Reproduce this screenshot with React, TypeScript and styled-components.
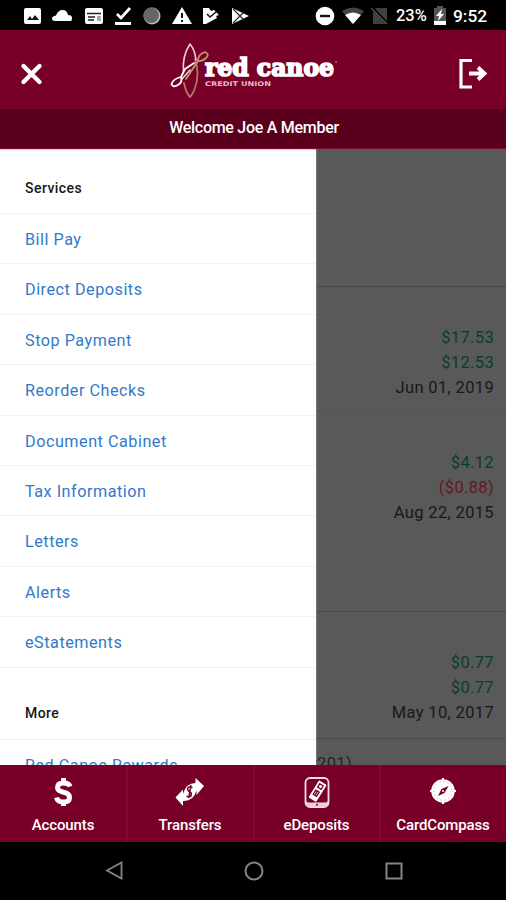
import React from "react";
import styled, { createGlobalStyle } from "styled-components";

const GlobalStyle = createGlobalStyle`
  *, *::before, *::after { box-sizing: border-box; }
  body { margin: 0; background: #000; font-family: Roboto, "Liberation Sans", sans-serif; }
`;

const Screen = styled.div`
  display: flex;
  flex-direction: column;
  width: 506px;
  height: 900px;
  overflow: hidden;
  background: #000;
`;

const StatusBar = styled.div`
  display: flex;
  flex: 0 0 30px;
  min-height: 0;
  justify-content: space-between;
  padding: 0 18px 0 22px;
  color: #fff;
`;

const StatusGroup = styled.div<{ $gap: number }>`
  display: flex;
  align-items: center;
  gap: ${(p) => p.$gap}px;
  height: 30px;
  padding-top: 1px;
`;

const StatusText = styled.span<{ $width: number; $size: number }>`
  width: ${(p) => p.$width}px;
  font-size: ${(p) => p.$size}px;
  font-weight: 500;
  line-height: 28px;
  white-space: nowrap;
  padding-top: 1px;
`;

const Header = styled.header`
  display: grid;
  grid-template-columns: 154px 1fr 154px;
  align-items: center;
  flex: 0 0 79px;
  background: #780028;
`;

const HeaderButton = styled.button<{ $end?: boolean }>`
  display: flex;
  justify-content: ${(p) => (p.$end ? "flex-end" : "flex-start")};
  padding: 8px 18px 0 20px;
  border: 0;
  background: none;
`;

const Logo = styled.svg`
  display: block;
  width: 180px;
  height: 60px;
  margin-left: 10px;
`;

const Wordmark = styled.text`
  font: 700 24px "DejaVu Serif", serif;
  fill: #fff;
  stroke: #fff;
  stroke-width: 1.7px;
`;

const Tagline = styled.text`
  font: 700 6.4px "DejaVu Sans", sans-serif;
  fill: #e3bcc7;
`;

const Welcome = styled.div`
  flex: 0 0 40px;
  background: #5a001d;
  border-bottom: 1px solid #80102f;
  color: #fff;
  font-size: 16px;
  font-weight: 500;
  line-height: 37px;
  letter-spacing: -0.28px;
  text-align: center;
  padding-left: 2px;
`;

const Body = styled.main`
  position: relative;
  flex: 0 0 616px;
  overflow: hidden;
  background: #595959;
`;

const Drawer = styled.nav`
  position: absolute;
  top: 0;
  bottom: 0;
  left: 0;
  width: 316px;
  overflow: hidden;
  background: #fff;
  box-shadow: 0 0 2px rgba(255, 255, 255, 0.45);
  border-top: 1px solid #d8c6cc;
`;

const SectionTitle = styled.h2<{ $height: number; $top: number }>`
  height: ${(p) => p.$height}px;
  margin: 0;
  padding: ${(p) => p.$top}px 0 0 25px;
  border-bottom: 1px solid #f2f2f2;
  color: #171717;
  font-size: 14px;
  font-weight: 500;
  line-height: 20px;
  letter-spacing: 0.45px;
`;

const MenuLink = styled.a`
  display: block;
  height: 50.4px;
  padding-left: 25px;
  border-bottom: 1px solid #f2f2f2;
  color: #3279c9;
  font-size: 16.2px;
  line-height: 51.8px;
  letter-spacing: 0.52px;
`;

const AccountCard = styled.section<{ $height: number; $top: number; $line?: string }>`
  height: ${(p) => p.$height}px;
  padding: ${(p) => p.$top}px 12px 0 317px;
  border-bottom: 1px solid ${(p) => p.$line ?? "#474747"};
  text-align: right;
`;

const Value = styled.div<{ $color?: string }>`
  color: ${(p) => p.$color ?? "#181818"};
  font-size: 16.5px;
  line-height: 24.8px;
  letter-spacing: 0.34px;
`;

const AccountName = styled.div`
  color: #242424;
  font-size: 16.5px;
  line-height: 24px;
  letter-spacing: 0.4px;
  text-align: left;
`;

const TabBar = styled.nav`
  display: grid;
  grid-template-columns: 126px 127px 126px 127px;
  flex: 0 0 77px;
  background: #780028;
`;

const Tab = styled.a`
  display: flex;
  flex-direction: column;
  align-items: center;
  padding-top: 12px;
  color: #fff;
  font-size: 15px;
  font-weight: 500;
  line-height: 20px;
  letter-spacing: -0.13px;
  & + & { box-shadow: inset 2px 0 #7e0a30; padding-left: 1px; }
  svg { display: block; margin-bottom: 6px; }
`;

const SystemNav = styled.div`
  display: flex;
  flex: 0 0 58px;
  align-items: center;
  justify-content: center;
  gap: 120px;
  padding-left: 1px;
`;

const green = "#083f2a";

const services = [
  "Bill Pay", "Direct Deposits", "Stop Payment", "Reorder Checks", "Document Cabinet",
  "Tax Information", "Letters", "Alerts", "eStatements",
];

const NotificationIcons = () => (
  <>
    <svg width="20" height="18" viewBox="0 0 20 18"><rect x="2" y="1" width="17" height="16" rx="2" fill="#fff" /><path d="M5 13l3-4 2 3 3-4 4 5z" fill="#111" /></svg>
    <svg width="22" height="14" viewBox="0 0 22 14"><path d="M3.500 12Q0 12 0 9.500T4 6.500Q6 1 10.500 1T16 6q4 0 4 3.200T17.500 12z" fill="#fff" /></svg>
    <svg width="20" height="18" viewBox="0 0 20 18"><rect x="1" y="1" width="18" height="16" rx="2" fill="#fff" /><path d="M3 6.500h14M4 10h7M4 13h6" stroke="#222" strokeWidth="1.7" /><rect x="13" y="9" width="4" height="5" fill="#aaa" /></svg>
    <svg width="18" height="20" viewBox="0 0 18 20"><path d="M3 8l4 4 9-10" stroke="#fff" strokeWidth="2.8" fill="none" /><path d="M1 17.5h16" stroke="#fff" strokeWidth="3" /></svg>
    <svg width="20" height="20" viewBox="0 0 20 20"><circle cx="10" cy="10" r="8.5" fill="#bbb" /><circle cx="9.2" cy="9.3" r="7.8" fill="#666" /></svg>
    <svg width="20" height="18" viewBox="0 0 20 18"><path d="M10 0l10 17H0z" fill="#fff" /><path d="M10 6v5m0 2v2" stroke="#111" strokeWidth="2" /></svg>
    <svg width="18" height="20" viewBox="0 0 18 20"><path d="M1 2h6l2 3 3-1 5 5-3 1 1 2-11 6H1z" fill="#fff" /><path d="M5 8l3 3 6-5" stroke="#111" strokeWidth="1.5" fill="none" /></svg>
    <svg width="20" height="20" viewBox="0 0 20 20"><path d="M2 2l17 8-17 8z" fill="#fff" /><path d="M3 3l11 11M3 17L14 6" stroke="#222" strokeWidth="1.1" /></svg>
  </>
);

const CanoeMark = () => (
  <g fill="none" strokeLinecap="round" strokeLinejoin="round">
    <path d="M31 19Q36 34 31 48Q29 54 26 57Q22 53 20 43" stroke="#b1795d" strokeWidth="1.8" />
    <path d="M26 4Q18 16 19.500 32M26 4Q31 10 32 20" stroke="#ecd0d9" strokeWidth="1.6" />
    <path d="M22 39L34 21Q34 14 41 12Q46 14 42 18Q38 22 34 21" stroke="#c49278" strokeWidth="1.8" />
    <path d="M30 23L21 29L17 37Q9 39 7.500 44Q9 48 14 45Q19 42 17 37" stroke="#fff" strokeWidth="1.8" />
    <path d="M26 30L18 39" stroke="#f3dde4" strokeWidth="1.5" />
  </g>
);

export default function App() {
  return (
    <>
      <GlobalStyle />
      <Screen>
        <StatusBar>
          <StatusGroup $gap={10}><NotificationIcons /></StatusGroup>
          <StatusGroup $gap={7}>
            <svg width="20" height="20" viewBox="0 0 20 20"><circle cx="10" cy="10" r="9.3" fill="#fff" /><path d="M5 10h10" stroke="#111" strokeWidth="2.4" /></svg>
            <svg width="22" height="18" viewBox="0 0 22 18"><path d="M0 4Q11-3 22 4L11 17z" fill="#444" /><path d="M3 8q8-5 16 0l-8 9z" fill="#fff" /></svg>
            <svg width="18" height="18" viewBox="0 0 18 18"><path d="M5 1h11v16H2V4z" fill="#404040" /><path d="M1 1l16 16" stroke="#000" strokeWidth="3" /><path d="M0 1l16 16" stroke="#555" strokeWidth="1.3" /></svg>
            <StatusText $width={31} $size={16.4}>23%</StatusText>
            <svg width="12" height="20" viewBox="0 0 12 20"><path d="M3 0h6v2h3v17H0V2h3z" fill="#555" /><path d="M0 15h12v4H0zM8 3L2 10h3l-1 5 6-7H7z" fill="#fff" /></svg>
            <StatusText $width={35} $size={17.3}>9:52</StatusText>
          </StatusGroup>
        </StatusBar>

        <Header>
          <HeaderButton aria-label="Close menu">
            <svg width="24" height="24" viewBox="0 0 24 24"><path d="M3.5 4l16 16m0-16l-16 16" stroke="#fff" strokeWidth="4.4" strokeLinecap="round" /></svg>
          </HeaderButton>
          <Logo viewBox="0 0 180 60">
            <CanoeMark />
            <Wordmark x="41" y="36" textLength="129" lengthAdjust="spacingAndGlyphs">red canoe</Wordmark>
            <Tagline x="41" y="46" textLength="66" lengthAdjust="spacingAndGlyphs">CREDIT UNION</Tagline>
            <circle cx="172" cy="22" r="0.8" fill="#d8a6b4" />
          </Logo>
          <HeaderButton $end aria-label="Log out">
            <svg width="30" height="32" viewBox="0 0 30 32"><path d="M14 2.500H3v26.500h11" fill="none" stroke="#fff" strokeWidth="3.2" /><path d="M11 15.500h15m-6-6l6.500 6-6.500 6" fill="none" stroke="#fff" strokeWidth="3.8" /></svg>
          </HeaderButton>
        </Header>
        <Welcome>Welcome Joe A Member</Welcome>

        <Body>
          <AccountCard $height={138} $top={0} />
          <AccountCard $height={125} $top={39} $line="#545454">
            <Value $color={green}>$17.53</Value>
            <Value $color={green}>$12.53</Value>
            <Value>Jun 01, 2019</Value>
          </AccountCard>
          <AccountCard $height={200} $top={39}>
            <Value $color={green}>$4.12</Value>
            <Value $color="#681522">($0.88)</Value>
            <Value>Aug 22, 2015</Value>
          </AccountCard>
          <AccountCard $height={127} $top={39} $line="#484848">
            <Value $color={green}>$0.77</Value>
            <Value $color={green}>$0.77</Value>
            <Value>May 10, 2017</Value>
          </AccountCard>
          <AccountCard $height={60} $top={13}><AccountName>201)</AccountName></AccountCard>
          <Drawer>
            <SectionTitle $height={64} $top={28}>Services</SectionTitle>
            {services.map((name) => <MenuLink key={name}>{name}</MenuLink>)}
            <SectionTitle $height={72} $top={35}>More</SectionTitle>
            <MenuLink>Red Canoe Rewards</MenuLink>
          </Drawer>
        </Body>

        <TabBar>
          <Tab>
            <svg width="22" height="32" viewBox="0 0 22 32"><path d="M18 9.500Q17 6 11.500 6 5.500 6 5.500 10.500q0 3.500 6 4.700T17.500 20.500q0 4.500-6 4.500-6 0-7-4.500M11.500 1v5m0 18v5" fill="none" stroke="#fff" strokeWidth="5" /></svg>
            Accounts
          </Tab>
          <Tab>
            <svg width="32" height="32" viewBox="0 0 32 32"><path d="M21.500 1l8.500 8-7.500 9v-4.500q-3 11-13.500 10.500V29L1.500 20.500 9 12.500V17Q12 6 21.500 6z" fill="#fff" /><path d="M18.500 10.500q-4.500-1.500-5 1.200 0 2 2.200 3t1.500 4q-1 2-4.700.5M17 8l-2.300 13" fill="none" stroke="#780028" strokeWidth="1.5" /></svg>
            Transfers
          </Tab>
          <Tab>
            <svg width="26" height="32" viewBox="0 0 26 32"><rect x="1.500" y="1" width="23" height="29" rx="4.500" fill="none" stroke="#f3dfe5" strokeWidth="1.8" /><path d="M2 23q0 2.500 3 2.500h16q3 0 3-2.500v4q0 3-3 3H5q-3 0-3-3z" fill="#ecd1da" /><g transform="rotate(32 13 15)"><rect x="8.500" y="4" width="9" height="20" rx="1" fill="#fff" /><path d="M11 6.500h4v4h-4zM11 14h4v5h-4zM13 14v5" fill="none" stroke="#780028" strokeWidth="1.3" /></g><circle cx="13" cy="27.800" r="1" fill="#780028" /></svg>
            eDeposits
          </Tab>
          <Tab>
            <svg width="28" height="32" viewBox="0 0 28 32"><path d="M14 1v26M1 14h26" stroke="#fff" strokeWidth="2" /><circle cx="14" cy="14" r="11.800" fill="#fff" /><circle cx="14" cy="14" r="9.300" fill="none" stroke="#c894a5" strokeWidth="1" strokeDasharray="1 3" /><path d="M19.500 9l-4 7L9 19l3.500-7z" fill="#780028" /><circle cx="14" cy="14" r="1" fill="#fff" /></svg>
            CardCompass
          </Tab>
        </TabBar>

        <SystemNav>
          <svg width="20" height="22" viewBox="0 0 20 22"><path d="M17.500 2.500v16L3 10.500z" fill="none" stroke="#858585" strokeWidth="1.800" /></svg>
          <svg width="20" height="20" viewBox="0 0 20 20"><circle cx="10" cy="10" r="8.500" fill="none" stroke="#858585" strokeWidth="2" /></svg>
          <svg width="20" height="20" viewBox="0 0 20 20"><rect x="2.500" y="2.500" width="15" height="15" fill="none" stroke="#858585" strokeWidth="2" /></svg>
        </SystemNav>
      </Screen>
    </>
  );
}
